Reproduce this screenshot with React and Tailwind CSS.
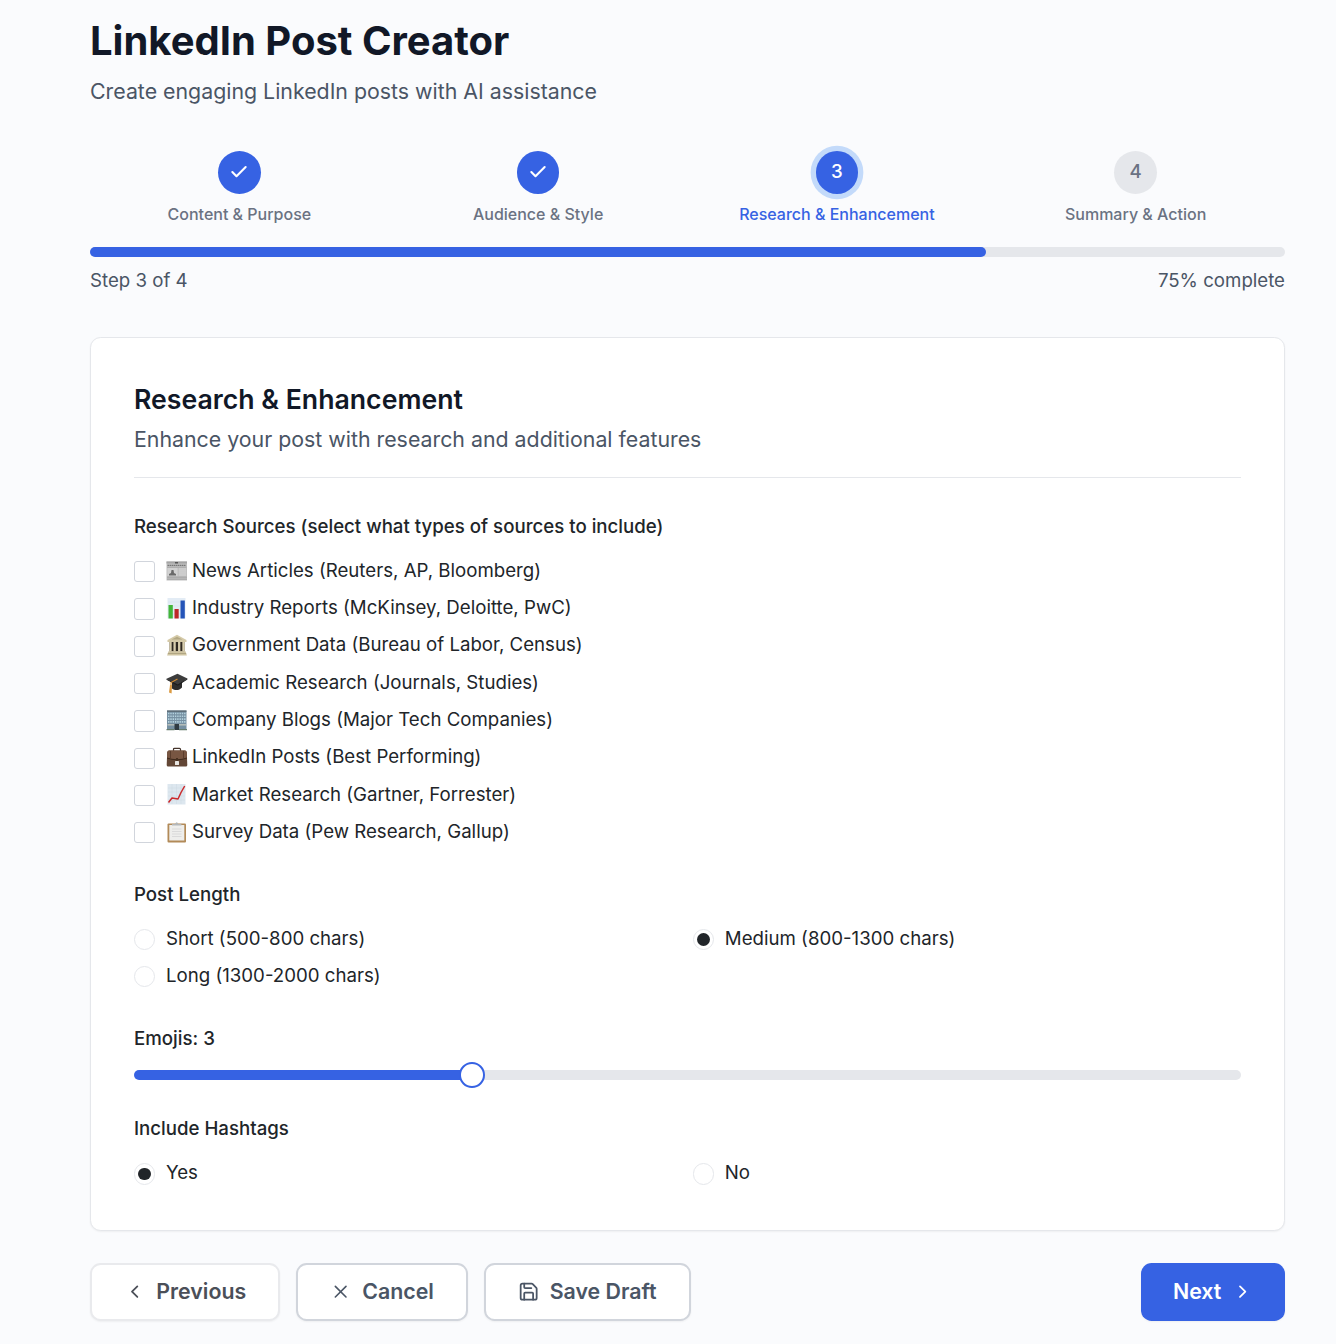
import React from "react";
import { Check, ChevronLeft, ChevronRight, X, Save } from "lucide-react";

const Svg = ({ children }) => (
  <svg viewBox="0 0 22 22" className="-mt-px h-[22px] w-[22px] shrink-0">{children}</svg>
);

const Newspaper = () => (
  <Svg>
    <rect x="0.5" y="1.5" width="20.5" height="19" fill="#c0c0c0" />
    <rect x="0.5" y="1.5" width="20.5" height="2" fill="#a5a5a5" />
    <path d="M9 2h3v1.500H9z" fill="#555" />
    <path d="M1.500 5.300h18.500" stroke="#777" strokeWidth="1.200" strokeDasharray="1.500 .5" />
    <path d="M1 7.200h19.500" stroke="#999" strokeWidth=".6" />
    <rect x="1.500" y="8" width="10" height="8" fill="#d2d2d2" />
    <path d="M3 15.500v-1.500l2-1 .5-3h2l.5 3 2 1v1.500z" fill="#6a6a6a" />
    <path d="M13 9h7M13 11h7M13 13h7M13 15h7" stroke="#dcdcdc" strokeWidth=".9" />
    <path d="M1 17.200h20M1 19.200h20" stroke="#9c9c9c" strokeWidth=".8" />
  </Svg>
);

const BarChart = () => (
  <Svg>
    <rect x="1.500" y="1" width="18" height="20.500" fill="#e3ecf5" />
    <path d="M2 5h17M2 9h17M2 13h17M2 17h17" stroke="#d3e0ec" strokeWidth=".5" />
    <rect x="2.500" y="8" width="4.300" height="13.500" fill="#43b53a" />
    <rect x="8.500" y="12" width="4.200" height="9.500" fill="#bd2828" />
    <rect x="14.500" y="3.500" width="4.300" height="18" fill="#2554b8" />
  </Svg>
);

const Museum = () => (
  <Svg>
    <path d="M11 .8 20.500 6v2h-19V6z" fill="#d5caa8" />
    <path d="M11 2.800 16.500 5.600h-11z" fill="#b3a883" />
    <rect x="3.500" y="8" width="15" height="9.500" fill="#302a22" />
    <path d="M4.500 8v9.500M8.600 8v9.500M13.200 8v9.500M17.500 8v9.500" stroke="#d9ceae" strokeWidth="2.300" />
    <path d="M2.500 17.300h17l1.400 4.200H1.100z" fill="#d0c5a2" />
    <path d="M1.800 19.500h18.400" stroke="#9c9170" strokeWidth=".6" />
  </Svg>
);

const GradCap = () => (
  <Svg>
    <path d="M6 9v7.500c3 2.500 7.500 2 10-1V9z" fill="#2c2c2c" />
    <path d="M.5 6.800 11.500 1.800l9.900 4.600-9.600 7z" fill="#3c3c3c" />
    <path d="m.5 6.800 11.300 5.600 9.600-6v1l-9.600 6.400L.5 7.800z" fill="#191919" />
    <path d="M11.500 7 5 10.500v4" fill="none" stroke="#d28b30" strokeWidth="1.100" />
    <path d="m4 13 2 .3-.4 8.200-2.600-1z" fill="#dc9b42" />
  </Svg>
);

const Office = () => (
  <Svg>
    <rect x="1" y="1.500" width="19.500" height="19" fill="#7690a2" />
    <rect x="1" y="1.500" width="19.500" height="1.300" fill="#59676f" />
    <path d="M2 4.500h18M2 7.300h18M2 10.100h18M2 12.900h18" stroke="#b5d2de" strokeWidth="1.600" strokeDasharray="1.400 .9" />
    <path d="M1.500 15.800h18.500" stroke="#b9bfba" strokeWidth="1.500" />
    <rect x="8.500" y="15" width="4.500" height="6" fill="#303b42" />
    <path d="M.5 20.700H8.500M13 20.700h8" stroke="#667b6c" strokeWidth="1.200" />
  </Svg>
);

const Briefcase = () => (
  <Svg>
    <path d="M7.500 5V3.200q0-.9 1-.9h5q1 0 1 .9V5" fill="none" stroke="#45342b" strokeWidth="1.200" />
    <path d="M3 4.500h16q1.500 0 1.800 2L21.300 19q0 1.500-1.500 1.500H2.200Q.7 20.500.7 19L1.200 6.500q.3-2 1.800-2z" fill="#634736" />
    <path d="M1.200 6.500Q1.500 4.500 3 4.500h16q1.500 0 1.800 2l.2 5.500q-10 3.500-20 0z" fill="#785642" />
    <path d="M1 12q10 3.500 20 0" fill="none" stroke="#382519" strokeWidth=".9" />
    <path d="M4.500 5v7.500M17.500 5v7.500" stroke="#5a3d2c" strokeWidth="1" />
    <rect x="9" y="15" width="4" height="4" rx=".6" fill="#e8e6e2" />
    <rect x="10" y="12" width="2" height="3" fill="#47301f" />
  </Svg>
);

const LineChart = () => (
  <Svg>
    <rect x="1.500" y="1" width="18" height="20.500" fill="#dde7ef" />
    <path d="M2 5h17M2 9h17M2 13h17M2 17h17M6 1v20M10.500 1v20M15 1v20" stroke="#ccd9e3" strokeWidth=".5" />
    <path d="m2.500 19.500 3.500-4.500 6 1 3-6.500L18.700 3" fill="none" stroke="#cb2a2c" strokeWidth="1.500" strokeLinejoin="round" />
  </Svg>
);

const Clipboard = () => (
  <Svg>
    <rect x="1.500" y="2.500" width="18.500" height="19" rx="1" fill="#b28a58" />
    <rect x="3.300" y="4" width="15" height="15.500" fill="#eeeeec" />
    <path d="M6 8h9.500M6 10.500h9.500M6 13h9.500M6 15.500h9.500" stroke="#dadada" strokeWidth="1.200" />
    <path d="M6 4.500V3h3q1.700-3.500 3.400 0h3v1.500z" fill="#b4b7b9" />
  </Svg>
);

const sources = [
  [Newspaper, "News Articles (Reuters, AP, Bloomberg)"],
  [BarChart, "Industry Reports (McKinsey, Deloitte, PwC)"],
  [Museum, "Government Data (Bureau of Labor, Census)"],
  [GradCap, "Academic Research (Journals, Studies)"],
  [Office, "Company Blogs (Major Tech Companies)"],
  [Briefcase, "LinkedIn Posts (Best Performing)"],
  [LineChart, "Market Research (Gartner, Forrester)"],
  [Clipboard, "Survey Data (Pew Research, Gallup)"],
];

const steps = ["Content & Purpose", "Audience & Style", "Research & Enhancement", "Summary & Action"];

function Step({ label, index }) {
  const active = index === 2;
  const future = index === 3;
  return (
    <div className="flex flex-1 flex-col items-center">
      <div
        className={
          "flex h-[42.67px] w-[42.67px] items-center justify-center rounded-full text-[18.67px] font-medium " +
          (future ? "bg-gray-200 text-gray-500" : "bg-[#3662e3] text-white") +
          (active ? " ring-[5.33px] ring-[#c3dafa]" : "")
        }
      >
        {index < 2 ? <Check className="h-[20px] w-[20px]" strokeWidth={2.5} /> : index + 1}
      </div>
      <div className={"mt-[10px] text-[16px] font-medium leading-[21.33px] " + (active ? "text-[#3662e3]" : "text-gray-500")}>
        {label}
      </div>
    </div>
  );
}

const Label = ({ children }) => (
  <div className="h-[27px] text-[18.67px] font-medium leading-[27px] text-[#212529]">{children}</div>
);

const Radio = ({ checked, children }) => (
  <div className="flex h-[26.67px] items-center">
    <span className="mt-px flex h-[21.33px] w-[21.33px] shrink-0 items-center justify-center rounded-full border border-gray-200 bg-white">
      {checked && <span className="h-[12.5px] w-[12.5px] rounded-full bg-[#212529]" />}
    </span>
    <span className="ml-[10.67px] text-[18.67px] leading-[26.67px] text-[#212529]">{children}</span>
  </div>
);

const btn = "flex h-[58px] items-center rounded-[10.67px] text-[21.33px] font-semibold ";

export default function App() {
  return (
    <div className="h-[1344px] overflow-hidden bg-[#fafbfd] pl-[90px] pr-[51px] pt-[17px] font-['Inter',sans-serif]">
      <h1 className="h-[48px] text-[40px] font-bold leading-[48px] text-[#111827]">LinkedIn Post Creator</h1>
      <p className="mt-[10px] h-[32px] text-[21.33px] leading-[32px] text-gray-600">Create engaging LinkedIn posts with AI assistance</p>

      <div className="mt-[43.9px] flex">
        {steps.map((s, i) => <Step key={s} label={s} index={i} />)}
      </div>
      <div className="mt-[22px] h-[10px] rounded-full bg-gray-200">
        <div className="h-full w-3/4 rounded-full bg-[#3662e3]" />
      </div>
      <div className="mt-[10.67px] flex h-[26.67px] justify-between text-[18.67px] leading-[26.67px] text-gray-600">
        <span>Step 3 of 4</span>
        <span>75% complete</span>
      </div>

      <div className="mt-[42.6px] h-[894px] rounded-[10.67px] border border-gray-200 bg-white px-[43px] pt-[43px] shadow-xs">
        <h2 className="h-[37px] text-[26.67px] font-semibold leading-[37px] text-[#111827]">Research &amp; Enhancement</h2>
        <p className="mt-[5px] h-[32px] text-[21.33px] leading-[32px] text-gray-600">Enhance your post with research and additional features</p>
        <div className="mt-[22px] mb-[35px] h-px bg-gray-200" />
        <Label>Research Sources (select what types of sources to include)</Label>
        <div className="mt-[18px] flex flex-col gap-[10.67px]">
          {sources.map(([Icon, text]) => (
            <div key={text} className="flex h-[26.67px] items-center">
              <span className="mt-px h-[21.33px] w-[21.33px] shrink-0 rounded-[3px] border border-gray-300 bg-white" />
              <span className="ml-[10.67px] flex items-center"><Icon /></span>
              <span className="ml-[4px] text-[18.67px] leading-[26.67px] text-[#212529]">{text}</span>
            </div>
          ))}
        </div>
        <div className="mt-[35px]"><Label>Post Length</Label></div>
        <div className="mt-[18px] grid grid-cols-2 gap-x-[10.67px] gap-y-[10.67px]">
          <Radio>Short (500-800 chars)</Radio>
          <Radio checked>Medium (800-1300 chars)</Radio>
          <Radio>Long (1300-2000 chars)</Radio>
        </div>
        <div className="mt-[35px]"><Label>Emojis: 3</Label></div>
        <div className="mt-[10px] flex h-[26.67px] items-center">
          <div className="h-[10px] w-[326px] rounded-l-full bg-[#3662e3]" />
          <div className="relative -mx-px h-[26px] w-[26px] shrink-0 rounded-full border-2 border-[#3662e3] bg-white" />
          <div className="h-[10px] flex-1 rounded-r-full bg-gray-200" />
        </div>
        <div className="mt-[27px]"><Label>Include Hashtags</Label></div>
        <div className="mt-[18px] grid grid-cols-2 gap-x-[10.67px]">
          <Radio checked>Yes</Radio>
          <Radio>No</Radio>
        </div>
      </div>

      <div className="mt-[32px] flex items-center gap-[16px]">
        <div className={btn + "w-[190px] border-2 border-[#e9eaed] bg-white pl-[32px] text-[#4b4f58] shadow-xs"}>
          <ChevronLeft className="mr-[11px] h-[21.33px] w-[21.33px]" />Previous
        </div>
        <div className={btn + "w-[172px] border-2 border-gray-300 bg-white pl-[32px] text-gray-600 shadow-xs"}>
          <X className="mr-[11px] h-[21.33px] w-[21.33px]" strokeWidth={1.8} />Cancel
        </div>
        <div className={btn + "w-[207px] border-2 border-gray-300 bg-white pl-[32px] text-gray-600 shadow-xs"}>
          <Save className="mr-[10.4px] h-[21.33px] w-[21.33px]" strokeWidth={2} />Save Draft
        </div>
        <div className={btn + "ml-auto w-[144px] bg-[#3662e3] pl-[32px] text-white shadow-xs"}>
          Next<ChevronRight className="ml-[11px] h-[21.33px] w-[21.33px]" />
        </div>
      </div>
    </div>
  );
}
